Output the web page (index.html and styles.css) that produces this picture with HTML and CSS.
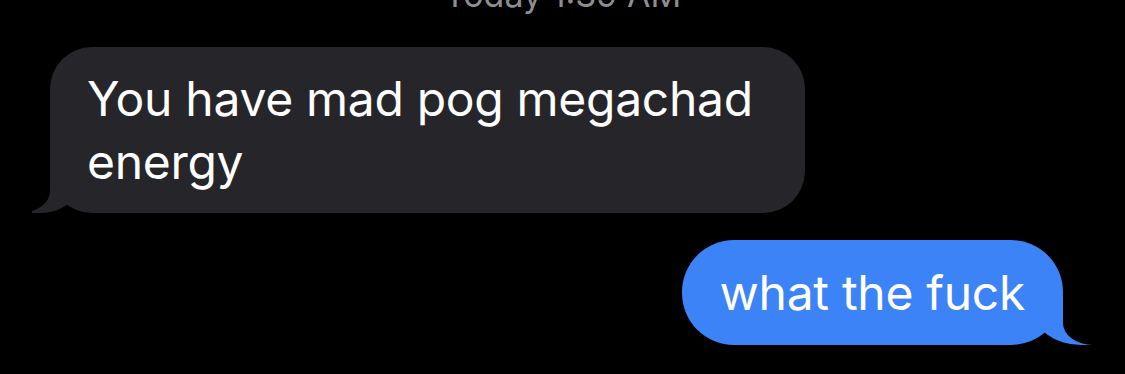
FILE: index.html
```html
<!DOCTYPE html>
<html lang="en">
<head>
    <meta charset="UTF-8">
    <meta name="viewport" content="width=device-width, initial-scale=1.0">
    <title>Messages</title>
    <link rel="stylesheet" href="styles.css">
</head>
<body>
    <div class="thread">
        <div class="timestamp">Today 1:39 AM</div>

        <div class="row row-in">
            <div class="bubble bubble-in">You have mad pog megachad energy</div>
        </div>

        <div class="row row-out">
            <div class="bubble bubble-out">what the fuck</div>
        </div>
    </div>
</body>
</html>
```

FILE: styles.css
```css
body {
    margin: 0;
    background: #000;
    font-family: Inter, "Noto Sans", sans-serif;
    overflow: hidden;
}
.thread {
    display: flex;
    flex-direction: column;
    height: 374px;
}
.timestamp {
    color: #8d8d92;
    font-size: 34px;
    line-height: 34px;
    text-align: center;
    margin-top: -22px;
    margin-bottom: 35px;
}
.row {
    display: flex;
}
.row-in {
    padding-left: 50px;
}
.row-out {
    justify-content: flex-end;
    padding-right: 62px;
    margin-top: 27px;
}
.bubble {
    position: relative;
    color: #fff;
    font-size: 48px;
    line-height: 63px;
    letter-spacing: -0.3px;
    box-sizing: border-box;
}
.bubble-in {
    background: #262529;
    width: 755px;
    padding: 20px 30px 20px 37px;
    border-radius: 42px;
}
.bubble-out {
    background: #3b83f6;
    padding: 21px 38px;
    border-radius: 52px;
}

/* tails */
.bubble::before,
.bubble::after {
    content: "";
    position: absolute;
    bottom: 0;
    height: 50px;
}
.bubble-in::before {
    left: -18px;
    width: 50px;
    background: #262529;
    border-bottom-right-radius: 42px 34px;
}
.bubble-in::after {
    left: -50px;
    width: 50px;
    background: #000;
    border-bottom-right-radius: 30px 22px;
}
.bubble-out::before {
    right: -30px;
    width: 60px;
    background: #3b83f6;
    border-bottom-left-radius: 48px 36px;
}
.bubble-out::after {
    right: -60px;
    width: 60px;
    background: #000;
    border-bottom-left-radius: 30px 22px;
}
```
